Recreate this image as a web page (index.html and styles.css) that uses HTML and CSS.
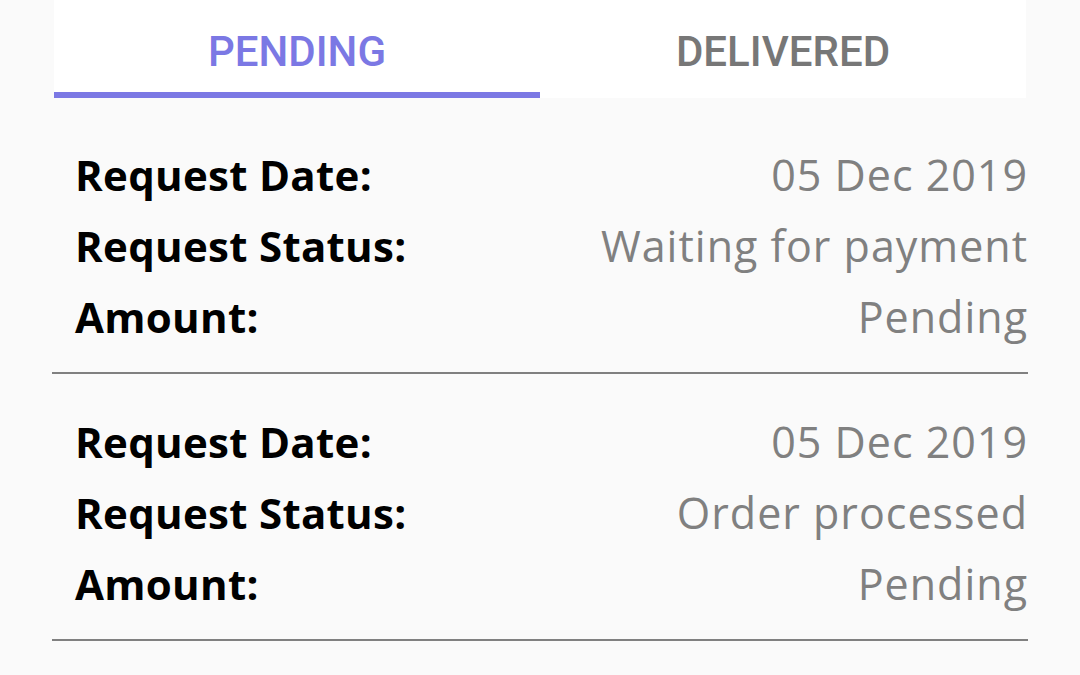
FILE: index.html
```html
<!DOCTYPE html>
<html lang="en">
<head>
<meta charset="utf-8">
<title>Requests</title>
<link rel="stylesheet" href="styles.css">
</head>
<body>
<div class="page">
  <nav class="tabs">
    <div class="tab tab-active">PENDING</div>
    <div class="tab">DELIVERED</div>
  </nav>
  <ul class="list">
    <li class="item">
      <div class="row"><span class="label">Request Date:</span><span class="value">05 Dec 2019</span></div>
      <div class="row"><span class="label">Request Status:</span><span class="value">Waiting for payment</span></div>
      <div class="row"><span class="label">Amount:</span><span class="value">Pending</span></div>
    </li>
    <li class="item">
      <div class="row"><span class="label">Request Date:</span><span class="value">05 Dec 2019</span></div>
      <div class="row"><span class="label">Request Status:</span><span class="value">Order processed</span></div>
      <div class="row"><span class="label">Amount:</span><span class="value">Pending</span></div>
    </li>
  </ul>
</div>
</body>
</html>
```
FILE: styles.css
```css
html, body {
  margin: 0;
  padding: 0;
  background: #fafafa;
}
.page {
  padding: 0 52px;
}
.tabs {
  display: flex;
  margin: 0 2px;
  background: #ffffff;
  height: 98px;
}
.tab {
  flex: 1;
  display: flex;
  align-items: center;
  justify-content: center;
  font-family: Roboto, "Liberation Sans", sans-serif;
  font-weight: 500;
  font-size: 42px;
  color: #777777;
  box-sizing: border-box;
  padding-top: 11px;
  border-bottom: 6px solid transparent;
}
.tab-active {
  color: #7b78e4;
  border-bottom-color: #7b78e4;
}
.list {
  list-style: none;
  margin: 9px 0 0;
  padding: 0;
}
.item {
  padding: 33px 0 19px;
  border-bottom: 2px solid #808080;
}
.row {
  height: 71px;
  display: flex;
  align-items: center;
  justify-content: space-between;
  box-sizing: border-box;
  padding: 0 1px 3px 23px;
}
.label {
  font-family: "Open Sans", sans-serif;
  font-weight: 700;
  font-size: 42px;
  letter-spacing: 0.3px;
  color: #000000;
}
.value {
  font-family: "Open Sans", sans-serif;
  font-weight: 400;
  font-size: 43px;
  letter-spacing: 1px;
  margin-right: -1px;
  color: #808080;
}
```
